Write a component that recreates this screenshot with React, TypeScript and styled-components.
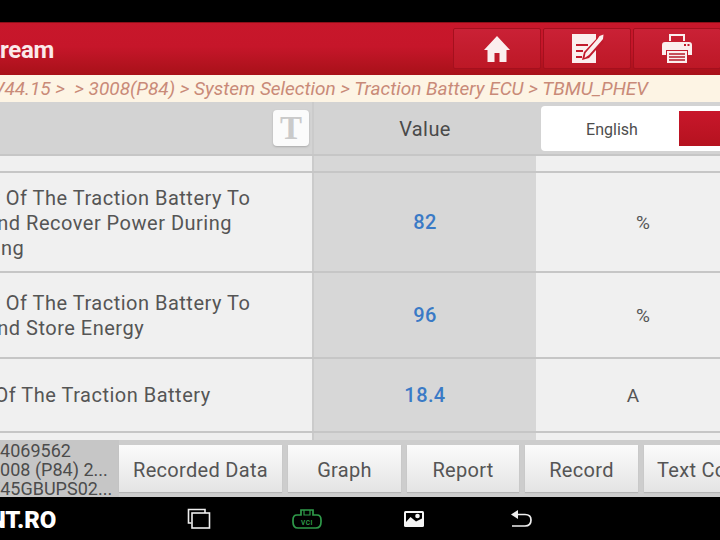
import React from "react";
import styled, { createGlobalStyle } from "styled-components";

const Global = createGlobalStyle`
  html, body { margin: 0; padding: 0; background: #000; }
  body { width: 720px; height: 540px; overflow: hidden; font-family: Roboto, "Liberation Sans", sans-serif; }
`;

const Screen = styled.div`
  width: 720px; height: 540px; display: flex; flex-direction: column; overflow: hidden; background: #000;
`;
const TopBlack = styled.div`height: 22px; flex: none; background: #000;`;
const Header = styled.header`
  height: 53px; flex: none; display: flex; align-items: flex-start; justify-content: space-between;
  background: linear-gradient(#c8172b 0%, #c6162a 45%, #a81119 100%);
  border-top: 1px solid #8c0f18; box-sizing: border-box;
`;
const TitleBox = styled.div`
  width: 54px; height: 52px; display: flex; justify-content: flex-end; align-items: center; overflow: hidden; flex: none;
`;
const Title = styled.span`
  color: #fbeaea; font-size: 24px; font-weight: 700; white-space: nowrap; letter-spacing: -0.3px; padding-top: 2px;
`;
const HeaderButtons = styled.div`display: flex; gap: 2px; padding-top: 5px; flex: none; margin-right: -1px;`;
const HeaderButton = styled.div`
  width: 88px; height: 41px; box-sizing: border-box; display: flex; align-items: center; justify-content: center;
  background: linear-gradient(#ca2136, #bd1826); border: 1px solid #a5101e; border-radius: 2px; flex: none;
`;
const Crumb = styled.div`
  height: 27px; flex: none; background: #fdf4e4; display: flex; justify-content: flex-end; align-items: center;
  padding-right: 72px; overflow: hidden; box-sizing: border-box;
`;
const CrumbText = styled.span`
  color: #c98a78; font-size: 19px; font-style: italic; white-space: pre; flex: none;
`;
const Table = styled.div`flex: 1; min-height: 0; display: flex; flex-direction: column; background: #f0f0f0; overflow: hidden;`;
const Row = styled.div<{ $h: number; $head?: boolean }>`
  height: ${(p) => p.$h}px; flex: none; box-sizing: border-box; display: grid; grid-template-columns: 312px 224px 1fr;
  border-bottom: 2px solid #c6c6c6;
  background: ${(p) => (p.$head ? "#d3d3d3" : "#f0f0f0")};
  &:last-child { border-bottom: 0; }
`;
const NameCell = styled.div<{ $head?: boolean }>`
  display: flex; align-items: center; overflow: hidden;
  justify-content: ${(p) => (p.$head ? "flex-end" : "flex-start")};
  padding-right: ${(p) => (p.$head ? "3px" : "0")};
`;
const NameText = styled.div<{ $x: number; $top: number }>`
  margin-left: ${(p) => p.$x}px; padding-top: ${(p) => p.$top}px; color: #555; font-size: 20px; line-height: 25px; white-space: nowrap; flex: none; letter-spacing: 0.5px;
`;
const ValueCell = styled.div<{ $head?: boolean }>`
  border-left: 2px solid #cbcbcb; background: ${(p) => (p.$head ? "#d3d3d3" : "#d7d7d7")};
  display: flex; align-items: center; justify-content: center; padding-top: ${(p) => (p.$head ? "2px" : "0")};
  color: ${(p) => (p.$head ? "#4a4a4a" : "#3a7ac6")};
  font-size: 20px; font-weight: ${(p) => (p.$head ? 400 : 500)}; letter-spacing: 0.4px;
`;
const UnitCell = styled.div<{ $center: number }>`
  display: flex; align-items: center; justify-content: center; color: #555; font-size: 19px;
  width: ${(p) => p.$center * 2}px;
`;
const FontBtn = styled.div`
  width: 36px; height: 36px; background: #fbfbfb; border-radius: 4px; box-shadow: 0 1px 2px #aaa;
  display: flex; align-items: center; justify-content: center;
  font-family: "Liberation Serif", serif; font-size: 33px; color: #cacaca; font-weight: 700; line-height: 36px;
`;
const LangCell = styled.div`display: flex; align-items: center; padding-left: 5px; overflow: hidden;`;
const Toggle = styled.div`
  width: 190px; height: 45px; flex: none; background: #fff; border-radius: 4px; display: flex; align-items: center; justify-content: space-between;
`;
const ToggleLabel = styled.span`
  width: 138px; box-sizing: border-box; padding: 2px 0 0 4px; text-align: center; color: #4d4d4d; font-size: 16px;
`;
const ToggleRed = styled.div`width: 52px; height: 35px; background: linear-gradient(#c8172b, #b5121f); flex: none;`;
const Bottom = styled.div`
  height: 57px; flex: none; background: #cdcdcd; display: flex; align-items: stretch; overflow: hidden;
`;
const Info = styled.div`
  width: 119px; flex: none; background: #c6c6c6; overflow: hidden; color: #4c4c4c; font-size: 18px; line-height: 19px; padding-top: 1px;
  box-sizing: border-box; display: flex; flex-direction: column; justify-content: center; white-space: nowrap;
`;
const InfoLine = styled.span`margin-left: -10px;`;
const ActionBar = styled.div`display: flex; gap: 6px; padding: 5px 0; flex: none;`;
const Action = styled.div<{ $w: number }>`
  width: ${(p) => p.$w}px; flex: none; box-sizing: border-box; display: flex; align-items: center; justify-content: center; padding-top: 2px;
  background: linear-gradient(#fbfbfb, #e4e4e4); color: #555; font-size: 20px; letter-spacing: 0.3px; white-space: nowrap; overflow: hidden;
  box-shadow: 0 1px 1px #b5b5b5;
`;
const ActionClip = styled(Action)`justify-content: flex-start; padding-left: 13px;`;
const Nav = styled.nav`height: 43px; flex: none; background: #000; display: flex; align-items: center;`;
const LogoBox = styled.div`width: 56px; flex: none; display: flex; justify-content: flex-end; overflow: hidden;`;
const Logo = styled.span`color: #fff; font-size: 24px; font-weight: 900; white-space: nowrap; letter-spacing: -0.2px; line-height: 28px; padding-top: 2px;`;
const NavIcons = styled.div`display: flex; margin-left: 89px;`;
const NavIcon = styled.div`width: 107.6px; display: flex; justify-content: center; align-items: center; flex: none;`;

const HomeIcon = () => (
  <svg width="28" height="28" viewBox="0 0 28 28"><path fill="#fbeeee" d="M14 1 L27 15 L23.5 15 L23.5 27 L16.5 27 L16.5 18 L11.5 18 L11.5 27 L4.5 27 L4.5 15 L1 15 Z" /></svg>
);
const NoteIcon = () => (
  <svg width="33" height="31" viewBox="0 0 33 31">
    <path fill="#fbeeee" d="M1 1 H25 V30 H1 Z" />
    <path stroke="#c21a2c" strokeWidth="2" fill="none" d="M5 12 H17 M5 18 H12 M5 24 H11" />
    <path fill="#c21a2c" d="M11 27 L13 19 L27 4 L33 9 L25 18 V17 L18 25 Z" />
    <path fill="#fbeeee" d="M13.5 25 L14.5 20 L26.5 6 L28.5 3 L32.5 1.5 L32 6 L29.5 9 L18 22 Z" />
  </svg>
);
const PrinterIcon = () => (
  <svg width="30" height="29" viewBox="0 0 30 29">
    <path fill="#fbeeee" d="M7 0 H23 V7 H21 V2 H9 V7 H7 Z" />
    <path fill="#fbeeee" d="M3 8 H27 a3 3 0 0 1 3 3 V21 H26 V16 H4 V21 H0 V11 a3 3 0 0 1 3-3 Z" />
    <rect x="5" y="17" width="20" height="12" fill="#fbeeee" />
    <path stroke="#b51a2a" strokeWidth="1.3" d="M7 20 H23 M7 23 H23 M7 26 H23" />
    <path fill="#c21a2c" d="M22 10 h2 v2 h-2 Z M25.5 10 h2 v2 h-2 Z" />
  </svg>
);
const WindowsIcon = () => (
  <svg width="24" height="22" viewBox="0 0 24 22" fill="none" stroke="#eee" strokeWidth="1.6">
    <path d="M4.5 15 H1.5 V1.5 H18 V5" />
    <rect x="5" y="5" width="17.5" height="15" />
  </svg>
);
const VciIcon = () => (
  <svg width="32" height="20" viewBox="-2 0 32 20" fill="none" stroke="#2f9a4a" strokeWidth="1.7">
    <path d="M9 6 V1 H21 V6 H25 C28 6 29 8 29 11 V13 C29 17 27 19 24 19 H6 C3 19 1 17 1 13 V11 C1 8 2 6 5 6 Z" />
    <path d="M12 1 V6 H18 V1" strokeWidth="1.2" />
    <text x="15" y="15.5" textAnchor="middle" fontSize="6.5" fill="#2f9a4a" stroke="none" fontFamily="Roboto" fontWeight="700" letterSpacing="0.6">VCI</text>
  </svg>
);
const PictureIcon = () => (
  <svg width="20" height="16" viewBox="0 0 20 16">
    <rect width="20" height="16" rx="1.5" fill="#f5f5f5" />
    <path fill="#000" d="M2 11 L6.5 6 L12 10.5 L18 7.5 V2 H2 Z" />
    <circle cx="13.5" cy="5" r="2.3" fill="#f5f5f5" />
  </svg>
);
const BackIcon = () => (
  <svg width="22" height="18" viewBox="0 0 22 18" fill="none" stroke="#eee" strokeWidth="1.7">
    <path d="M4 4.5 H14 C18 4.5 20 7 20 10 C20 13.5 18 16 14 16 H1" />
    <path fill="#eee" stroke="none" d="M0 4.5 L7 0 V9 Z" />
  </svg>
);

export default function App() {
  return (
    <Screen>
      <Global />
      <TopBlack />
      <Header>
        <TitleBox><Title>Data Stream</Title></TitleBox>
        <HeaderButtons>
          <HeaderButton><HomeIcon /></HeaderButton>
          <HeaderButton><NoteIcon /></HeaderButton>
          <HeaderButton><PrinterIcon /></HeaderButton>
        </HeaderButtons>
      </Header>
      <Crumb>
        <CrumbText>V44.15 {">"}  {">"} 3008(P84) {">"} System Selection {">"} Traction Battery ECU {">"} TBMU_PHEV</CrumbText>
      </Crumb>
      <Table>
        <Row $h={54} $head>
          <NameCell $head><FontBtn>T</FontBtn></NameCell>
          <ValueCell $head>Value</ValueCell>
          <LangCell>
            <Toggle>
              <ToggleLabel>English</ToggleLabel>
              <ToggleRed />
            </Toggle>
          </LangCell>
        </Row>
        <Row $h={17}>
          <NameCell />
          <ValueCell />
          <UnitCell $center={107} />
        </Row>
        <Row $h={100}>
          <NameCell>
            <NameText $x={-81} $top={2}>Capacity Of The Traction Battery To<br />Retain And Recover Power During<br />Recharging</NameText>
          </NameCell>
          <ValueCell>82</ValueCell>
          <UnitCell $center={107}>%</UnitCell>
        </Row>
        <Row $h={86}>
          <NameCell>
            <NameText $x={-81} $top={2}>Capacity Of The Traction Battery To<br />Retain And Store Energy</NameText>
          </NameCell>
          <ValueCell>96</ValueCell>
          <UnitCell $center={107}>%</UnitCell>
        </Row>
        <Row $h={74}>
          <NameCell>
            <NameText $x={-80} $top={0}>Current Of The Traction Battery</NameText>
          </NameCell>
          <ValueCell>18.4</ValueCell>
          <UnitCell $center={97}>A</UnitCell>
        </Row>
        <Row $h={10}>
          <NameCell />
          <ValueCell />
          <UnitCell $center={107} />
        </Row>
      </Table>
      <Bottom>
        <Info>
          <InfoLine>84069562</InfoLine>
          <InfoLine>3008 (P84) 2...</InfoLine>
          <InfoLine>E45GBUPS02...</InfoLine>
        </Info>
        <ActionBar>
          <Action $w={163}>Recorded Data</Action>
          <Action $w={113}>Graph</Action>
          <Action $w={112}>Report</Action>
          <Action $w={113}>Record</Action>
          <ActionClip $w={100}>Text Code</ActionClip>
        </ActionBar>
      </Bottom>
      <Nav>
        <LogoBox><Logo>NT.RO</Logo></LogoBox>
        <NavIcons>
          <NavIcon><WindowsIcon /></NavIcon>
          <NavIcon><VciIcon /></NavIcon>
          <NavIcon><PictureIcon /></NavIcon>
          <NavIcon><BackIcon /></NavIcon>
        </NavIcons>
      </Nav>
    </Screen>
  );
}
